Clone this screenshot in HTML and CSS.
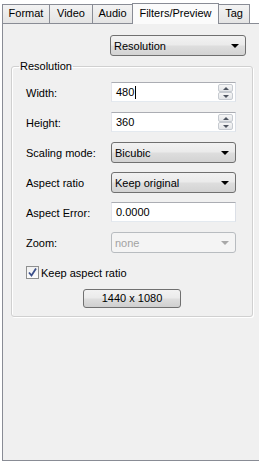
FILE: index.html
```html
<!DOCTYPE html>
<html>
<head>
  <meta charset="utf-8">
  <title>Filters/Preview</title>
  <link rel="stylesheet" href="styles.css">
</head>
<body>
  <div class="window">

    <!-- tabs -->
    <div class="tabs">
      <div class="tab t-format">Format</div>
      <div class="tab t-video">Video</div>
      <div class="tab t-audio">Audio</div>
      <div class="tab t-filters active">Filters/Preview</div>
      <div class="tab t-tag">Tag</div>
    </div>

    <div class="panel">
      <div class="combo top-combo">Resolution</div>

      <fieldset class="group">
        <legend>Resolution</legend>

        <div class="grid">
          <span class="label">Width:</span>
          <div class="spin">
            <div class="value">480<span class="caret"></span></div>
            <div class="arrows"><div class="arr up"></div><div class="arr down"></div></div>
          </div>

          <span class="label">Height:</span>
          <div class="spin">
            <div class="value">360</div>
            <div class="arrows"><div class="arr up"></div><div class="arr down"></div></div>
          </div>

          <span class="label">Scaling mode:</span>
          <div class="combo">Bicubic</div>

          <span class="label">Aspect ratio</span>
          <div class="combo">Keep original</div>

          <span class="label">Aspect Error:</span>
          <div class="edit">0.0000</div>

          <span class="label">Zoom:</span>
          <div class="combo disabled">none</div>
        </div>

        <div class="check-row">
          <span class="checkbox">
            <svg width="11" height="11" viewBox="0 0 11 11"><path d="M2 5.5 L4.5 8.5 L9 1.5" fill="none" stroke="#3b4f8a" stroke-width="1.8"/></svg>
          </span>
          <span>Keep aspect ratio</span>
        </div>

        <div class="btn-row">
          <div class="button">1440 x 1080</div>
        </div>
      </fieldset>
    </div>

  </div>
</body>
</html>
```

FILE: styles.css
```css
body {
  margin: 0;
  background: #fff;
  font-family: "Liberation Sans", Arial, sans-serif;
  font-size: 11px;
  color: #000;
  overflow: hidden;
}

.window {
  padding: 3px 0 0 2px;
}

/* tabs */
.tabs {
  display: flex;
  align-items: flex-end;
  height: 20px;
}

.tab {
  box-sizing: border-box;
  height: 19px;
  line-height: 17px;
  text-align: center;
  border: 1px solid #898c95;
  border-left: none;
  border-bottom: none;
  background: linear-gradient(#f3f3f3, #e4e4e4);
}

.t-format { width: 48px; border-left: 1px solid #898c95; }
.t-video  { width: 43px; }
.t-audio  { width: 40px; }
.t-tag    { width: 31px; }

.tab.active {
  width: 87px;
  height: 21px;
  margin-left: -1px;
  margin-bottom: -1px;
  line-height: 18px;
  border-left: 1px solid #898c95;
  background: #fbfbfb;
  position: relative;
  z-index: 1;
}

/* page */
.panel {
  box-sizing: border-box;
  height: 438px;
  width: 257px;
  border: 1px solid #898c95;
  border-right: none;
  background: #f0f0f0;
  padding-top: 11px;
}

.combo {
  box-sizing: border-box;
  height: 21px;
  border: 1px solid #707070;
  border-radius: 3px;
  background: linear-gradient(#f2f2f2 0%, #ebebeb 45%, #dddddd 55%, #d3d3d3 100%);
  display: flex;
  align-items: center;
  justify-content: space-between;
  padding-left: 3px;
}

.combo::after {
  content: "";
  border-top: 4px solid #000;
  border-left: 4px solid transparent;
  border-right: 4px solid transparent;
  margin-right: 6px;
}

.combo.disabled {
  border-color: #b8bcc0;
  background: #f4f4f4;
  color: #a2a2a2;
}

.combo.disabled::after {
  border-top-color: #a8a8a8;
}

.top-combo {
  width: 136px;
  margin-left: 107px;
}

/* group box */
.group {
  box-sizing: border-box;
  width: 242px;
  margin: 4px 0 0 8px;
  padding: 9px 0 8px 14px;
  border: 1px solid #d0d0d0;
  border-radius: 3px;
  box-shadow: inset 1px 1px 0 #fff, 1px 1px 0 #fff;
}

.group legend {
  margin-left: -7px;
  padding: 0 1px;
  line-height: 13px;
}

.grid {
  display: grid;
  grid-template-columns: 85px 125px;
  grid-auto-rows: 21px;
  row-gap: 9px;
  align-items: center;
}

.edit, .spin {
  box-sizing: border-box;
  height: 20px;
  align-self: start;
  background: #fff;
  border: 1px solid;
  border-color: #abadb3 #dbdfe6 #e3e9ef #e2e3ea;
}

.edit {
  padding-left: 4px;
  line-height: 18px;
}

.spin {
  display: flex;
}

.spin .value {
  flex: 1;
  padding-left: 4px;
  line-height: 18px;
  display: flex;
  align-items: center;
}

.caret {
  display: inline-block;
  width: 1px;
  height: 13px;
  background: #000;
  margin-left: 1px;
}

.arrows {
  width: 15px;
  display: flex;
  flex-direction: column;
  padding: 1px 2px 1px 0;
}

.arr {
  flex: 1;
  border: 1px solid #c6cad0;
  border-radius: 2px;
  background: linear-gradient(#f6f6f6, #e3e5e8);
  display: flex;
  align-items: center;
  justify-content: center;
}

.arr.up::after {
  content: "";
  border-bottom: 3px solid #4f5560;
  border-left: 3px solid transparent;
  border-right: 3px solid transparent;
}

.arr.down::after {
  content: "";
  border-top: 3px solid #4f5560;
  border-left: 3px solid transparent;
  border-right: 3px solid transparent;
}

/* checkbox + button */
.check-row {
  display: flex;
  align-items: center;
  gap: 2px;
  margin-top: 13px;
  height: 13px;
}

.checkbox {
  box-sizing: border-box;
  width: 13px;
  height: 13px;
  border: 1px solid #8e8f8f;
  background: linear-gradient(#f0f0f0, #fcfcfc);
  display: flex;
  align-items: center;
  justify-content: center;
}

.btn-row {
  display: flex;
  justify-content: center;
  margin: 10px 0 0 -14px;
}

.button {
  box-sizing: border-box;
  width: 98px;
  height: 19px;
  line-height: 17px;
  text-align: center;
  border: 1px solid #707070;
  border-radius: 3px;
  background: linear-gradient(#f2f2f2 0%, #ebebeb 45%, #dddddd 55%, #cfcfcf 100%);
}
```
